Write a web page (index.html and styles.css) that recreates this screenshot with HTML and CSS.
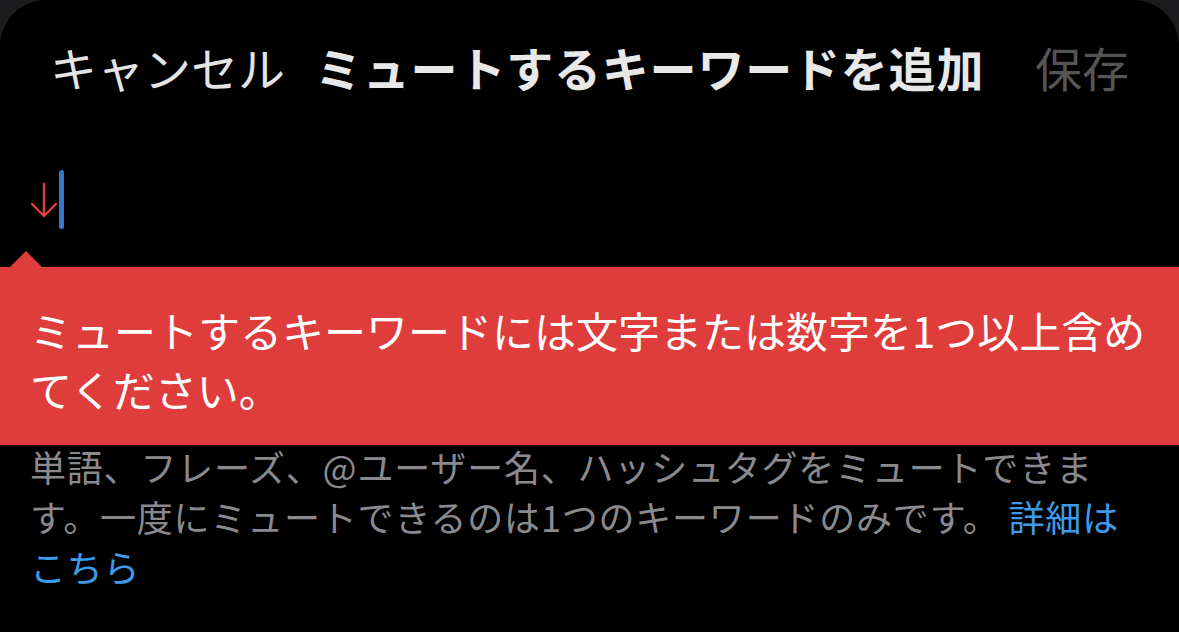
FILE: index.html
```html
<!DOCTYPE html>
<html lang="ja">
<head>
    <meta charset="UTF-8">
    <meta name="viewport" content="width=device-width, initial-scale=1.0">
    <title>ミュートするキーワードを追加</title>
    <link rel="stylesheet" href="styles.css">
</head>
<body>
    <div class="sheet">
        <div class="header">
            <span class="header-cancel">キャンセル</span>
            <span class="header-title">ミュートするキーワードを追加</span>
            <span class="header-save">保存</span>
        </div>

        <div class="input-row">
            <svg class="input-arrow" width="28" height="38" viewBox="0 0 28 38">
                <path d="M14 3 L14 35 M2 23 L14 35 L26 23" fill="none" stroke="#e0403c" stroke-width="2.4" stroke-linecap="round" stroke-linejoin="round"/>
            </svg>
            <span class="input-caret"></span>
        </div>

        <div class="error-banner">
            ミュートするキーワードには文字または数字を1つ以上含めてください。
        </div>

        <p class="help-text">
            単語、フレーズ、@ユーザー名、ハッシュタグをミュートできます。一度にミュートできるのは1つのキーワードのみです。 <span class="help-link">詳細はこちら</span>
        </p>
    </div>
</body>
</html>
```

FILE: styles.css
```css
html, body {
    margin: 0;
    padding: 0;
    height: 100%;
}

body {
    background-color: #1c1c1e;
    font-family: "Noto Sans CJK JP", "Noto Sans", sans-serif;
    overflow: hidden;
}

.sheet {
    background-color: #000;
    height: 100%;
    border-radius: 46px 46px 0 0;
}

.header {
    display: flex;
    align-items: center;
    height: 132px;
    padding: 0 50px;
    font-size: 47px;
}

.header-cancel {
    color: #e4e4e4;
}

.header-title {
    margin-left: 30px;
    color: #e8e8e8;
    font-weight: bold;
    letter-spacing: 0.8px;
}

.header-save {
    margin-left: auto;
    color: #555;
}

.input-row {
    display: flex;
    align-items: center;
    height: 135px;
    padding-left: 30px;
}

.input-arrow {
    display: block;
}

.input-caret {
    width: 5px;
    height: 59px;
    margin-left: 1px;
    border-radius: 3px;
    background-color: #3478c6;
}

.error-banner {
    position: relative;
    background-color: #df3c3c;
    color: #fff;
    font-size: 42px;
    line-height: 59px;
    padding: 33px 28px 27px 30px;
}

.error-banner::before {
    content: "";
    position: absolute;
    left: 10px;
    top: -16px;
    border-left: 16px solid transparent;
    border-right: 16px solid transparent;
    border-bottom: 16px solid #df3c3c;
}

.help-text {
    margin: -4px 0 0;
    padding: 0 30px;
    color: #8a8a8e;
    font-size: 36px;
    line-height: 50px;
    letter-spacing: 0.8px;
}

.help-link {
    color: #3d9be9;
}
```
